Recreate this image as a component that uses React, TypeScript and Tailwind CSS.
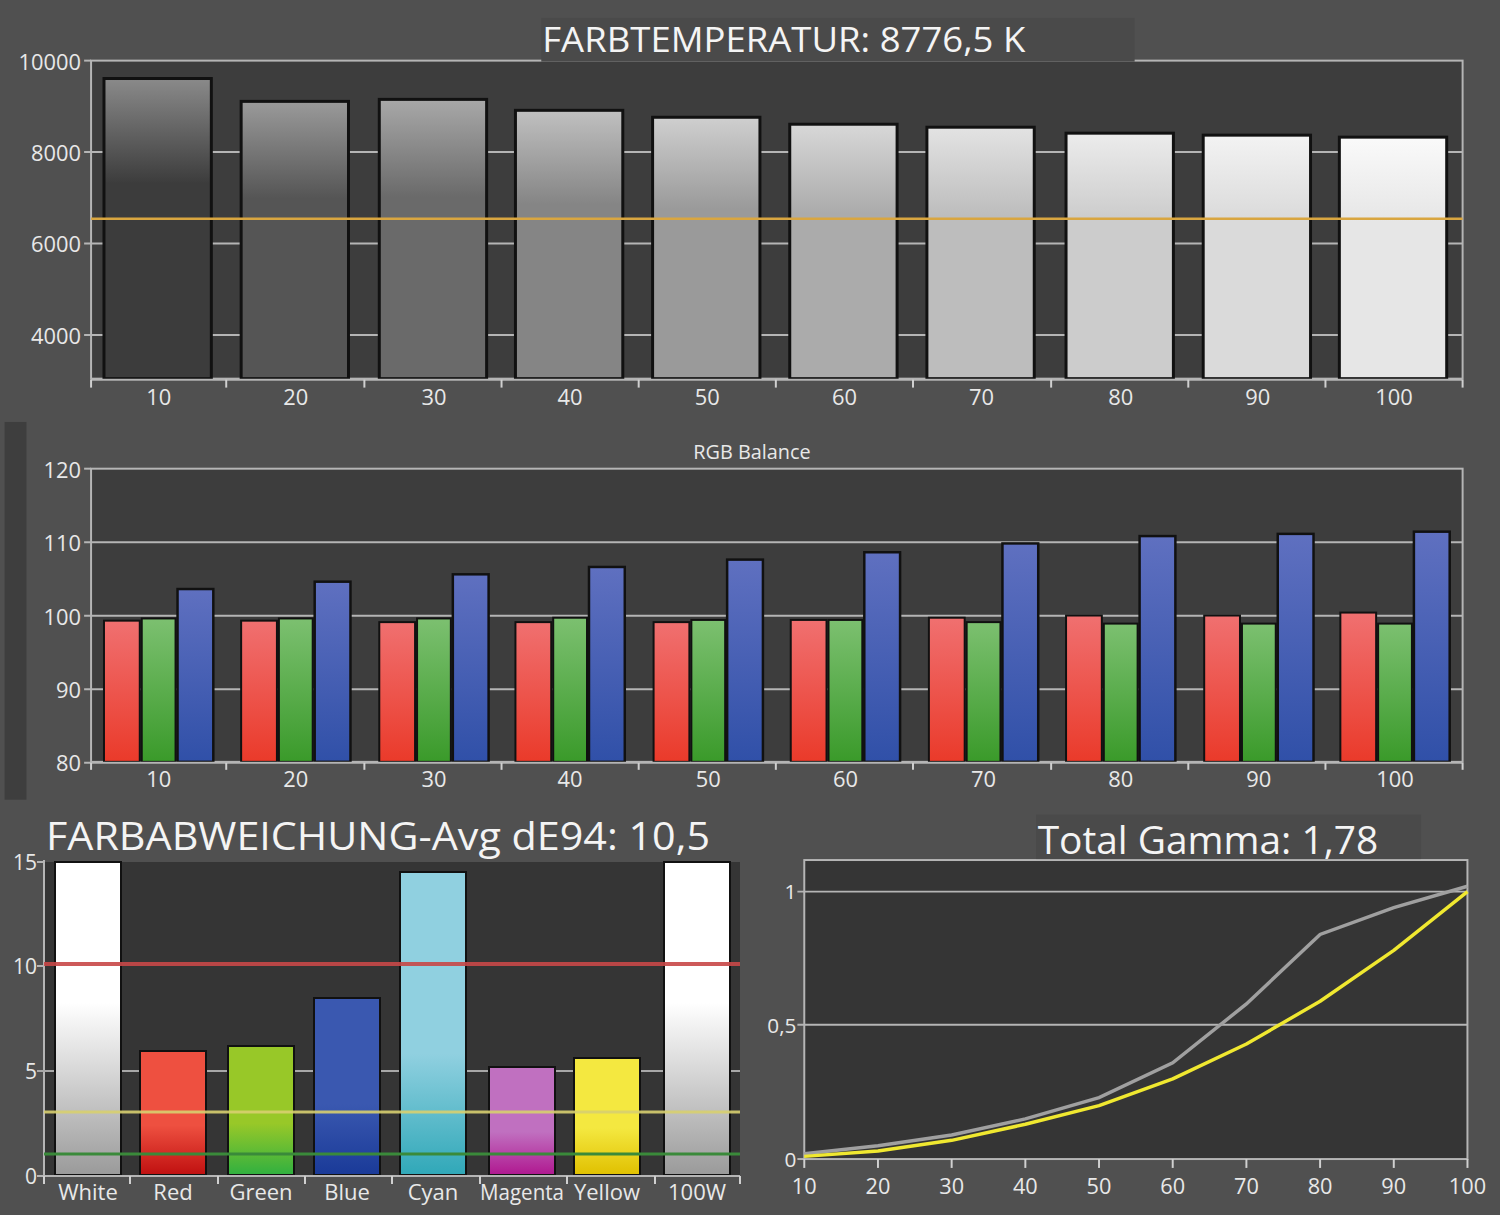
import React from "react";

const F = "'Open Sans', 'Noto Sans', sans-serif";
const lab = { fill: "#e8e8e8", fontFamily: F } as const;

function TopChart() {
  const xs = [100, 238, 377, 514, 652, 790, 928, 1068, 1206, 1343];
  const tops = [79, 102, 100, 111, 118, 125, 128, 134, 136, 138];
  const ticks = [87, 223, 362, 500, 638, 776, 914, 1053, 1191, 1329, 1467];
  const shades = [
    ["#8a8a8a", "#3c3c3c"], ["#9a9a9a", "#555"], ["#a8a8a8", "#6a6a6a"], ["#c0c0c0", "#858585"],
    ["#cfcfcf", "#9a9a9a"], ["#d8d8d8", "#ababab"], ["#e3e3e3", "#bdbdbd"], ["#ececec", "#cccccc"],
    ["#f3f3f3", "#dadada"], ["#fafafa", "#e6e6e6"],
  ];
  return (
    <svg viewBox="0 0 1500 420" className="block w-full h-[420px]">
      <defs>
        {shades.map((s, i) => (
          <linearGradient key={i} id={`t${i}`} x1="0" y1="0" x2="0" y2="1">
            <stop offset="0" stopColor={s[0]} />
            <stop offset="0.35" stopColor={s[1]} />
            <stop offset="1" stopColor={s[1]} />
          </linearGradient>
        ))}
      </defs>
      <rect x="87" y="61" width="1380" height="320" fill="#3d3d3d" />
      <rect x="87" y="61" width="1380" height="320" fill="none" stroke="#b5b5b5" strokeWidth="2" />
      {[153, 245, 337].map((y) => (
        <line key={y} x1="80" x2="1467" y1={y} y2={y} stroke="#b5b5b5" strokeWidth="2" />
      ))}
      <line x1="80" x2="87" y1="61" y2="61" stroke="#b5b5b5" strokeWidth="2" />
      {xs.map((x, i) => (
        <rect key={x} x={x} y={tops[i]} width="108" height={381 - tops[i]} fill={`url(#t${i})`} stroke="#111" strokeWidth="3" />
      ))}
      <line x1="87" x2="1467" y1="220" y2="220" stroke="#d9a640" strokeWidth="2.5" />
      <line x1="87" x2="1467" y1="382" y2="382" stroke="#b5b5b5" strokeWidth="2" />
      {ticks.map((x) => (
        <line key={x} x1={x} x2={x} y1="382" y2="390" stroke="#d0d0d0" strokeWidth="2" />
      ))}
      {[["10000", 70], ["8000", 162], ["6000", 254], ["4000", 346]].map(([t, y]) => (
        <text key={t} x="77" y={y as number} textAnchor="end" fontSize="22" {...lab}>{t}</text>
      ))}
      {xs.map((x, i) => (
        <text key={i} x={x + 55} y="408" textAnchor="middle" fontSize="22" {...lab}>{(i + 1) * 10}</text>
      ))}
      <rect x="540" y="18" width="597" height="44" fill="#4a4a4a" />
      <text x="784" y="52" textAnchor="middle" fontSize="34" textLength="486" lengthAdjust="spacingAndGlyphs" fill="#f4f4f4" fontFamily={F}>FARBTEMPERATUR: 8776,5 K</text>
    </svg>
  );
}

function RgbChart() {
  const xs = [100, 238, 377, 514, 653, 791, 930, 1068, 1207, 1344];
  const R = [99.2, 99.2, 99, 99, 99, 99.3, 99.6, 99.9, 99.9, 100.3];
  const G = [99.5, 99.5, 99.5, 99.6, 99.3, 99.3, 99, 98.8, 98.8, 98.8];
  const B = [103.5, 104.5, 105.5, 106.5, 107.5, 108.5, 109.7, 110.7, 111, 111.3];
  const y = (v: number) => 767 - (v - 80) * 7.4;
  const ticks = [87, 223, 362, 500, 638, 776, 914, 1053, 1191, 1329, 1467];
  return (
    <svg viewBox="0 420 1500 395" className="block w-full h-[395px]">
      <defs>
        <linearGradient id="gr" x1="0" y1="0" x2="0" y2="1"><stop offset="0" stopColor="#f07070" /><stop offset="1" stopColor="#ea3a2a" /></linearGradient>
        <linearGradient id="gg" x1="0" y1="0" x2="0" y2="1"><stop offset="0" stopColor="#7cc070" /><stop offset="1" stopColor="#3a9a2a" /></linearGradient>
        <linearGradient id="gb" x1="0" y1="0" x2="0" y2="1"><stop offset="0" stopColor="#5f70c0" /><stop offset="1" stopColor="#3050a8" /></linearGradient>
      </defs>
      <rect x="0" y="425" width="22" height="380" fill="#3e3e3e" />
      <rect x="87" y="472" width="1380" height="295" fill="#3d3d3d" stroke="#b5b5b5" strokeWidth="2" />
      {[546, 620, 694].map((yy) => (
        <line key={yy} x1="80" x2="1467" y1={yy} y2={yy} stroke="#b5b5b5" strokeWidth="2" />
      ))}
      <line x1="80" x2="87" y1="472" y2="472" stroke="#b5b5b5" strokeWidth="2" />
      {xs.map((x, i) => (
        <g key={x}>
          <rect x={x} y={y(R[i])} width="36" height={767 - y(R[i])} fill="url(#gr)" stroke="#111" strokeWidth="2" />
          <rect x={x + 38} y={y(G[i])} width="34" height={767 - y(G[i])} fill="url(#gg)" stroke="#111" strokeWidth="2" />
          <rect x={x + 74} y={y(B[i])} width="36" height={767 - y(B[i])} fill="url(#gb)" stroke="#111" strokeWidth="2.5" />
        </g>
      ))}
      <line x1="80" x2="1467" y1="768" y2="768" stroke="#b5b5b5" strokeWidth="2" />
      {ticks.map((x) => (
        <line key={x} x1={x} x2={x} y1="768" y2="775" stroke="#d0d0d0" strokeWidth="2" />
      ))}
      {[["120", 481], ["110", 555], ["100", 629], ["90", 703], ["80", 776]].map(([t, yy]) => (
        <text key={t} x="77" y={yy as number} textAnchor="end" fontSize="22" {...lab}>{t}</text>
      ))}
      {xs.map((x, i) => (
        <text key={i} x={x + 55} y="792" textAnchor="middle" fontSize="22" {...lab}>{(i + 1) * 10}</text>
      ))}
      <text x="752" y="462" textAnchor="middle" fontSize="20" {...lab}>RGB Balance</text>
    </svg>
  );
}

function DeltaChart() {
  const bars: [string, number, number, string, string][] = [
    ["White", 55, 862, "#ffffff", "#9a9a9a"],
    ["Red", 140, 1051, "#ee5040", "#c01010"],
    ["Green", 228, 1046, "#98c828", "#30b040"],
    ["Blue", 314, 998, "#3a58b0", "#1a3a98"],
    ["Cyan", 400, 872, "#90d0e0", "#30a8b8"],
    ["Magenta", 489, 1067, "#c070c0", "#b01890"],
    ["Yellow", 574, 1058, "#f4e840", "#e0c000"],
    ["100W", 664, 862, "#ffffff", "#9a9a9a"],
  ];
  const ticks = [44, 130, 218, 305, 392, 480, 567, 655, 740];
  return (
    <svg viewBox="0 810 750 405" className="block w-[750px] h-[405px]">
      <defs>
        {bars.map((b, i) => (
          <linearGradient key={i} id={`d${i}`} x1="0" y1="0" x2="0" y2="1">
            <stop offset="0" stopColor={b[3]} />
            <stop offset={i === 0 || i === 7 ? "0.45" : "0.6"} stopColor={b[3]} />
            <stop offset="1" stopColor={b[4]} />
          </linearGradient>
        ))}
      </defs>
      <rect x="44" y="862" width="696" height="313" fill="#353535" />
      <line x1="44" x2="44" y1="860" y2="1176" stroke="#b5b5b5" strokeWidth="2" />
      <line x1="37" x2="44" y1="862" y2="862" stroke="#b5b5b5" strokeWidth="2" />
      <line x1="37" x2="740" y1="1071" y2="1071" stroke="#a8a8a8" strokeWidth="2" />
      <line x1="37" x2="44" y1="966" y2="966" stroke="#b5b5b5" strokeWidth="2" />
      {bars.map((b, i) => (
        <rect key={i} x={b[1]} y={b[2]} width="66" height={1175 - b[2]} fill={`url(#d${i})`} stroke="#111" strokeWidth="2" />
      ))}
      <line x1="44" x2="740" y1="964" y2="964" stroke="#c84848" strokeWidth="4" opacity="0.9" />
      <line x1="44" x2="740" y1="1112" y2="1112" stroke="#d8d070" strokeWidth="3" opacity="0.9" />
      <line x1="44" x2="740" y1="1154" y2="1154" stroke="#3a8a3a" strokeWidth="3" />
      <line x1="37" x2="740" y1="1176" y2="1176" stroke="#b5b5b5" strokeWidth="2" />
      {ticks.map((x) => (
        <line key={x} x1={x} x2={x} y1="1176" y2="1184" stroke="#d0d0d0" strokeWidth="2" />
      ))}
      {[["15", 870], ["10", 974], ["5", 1079], ["0", 1184]].map(([t, y]) => (
        <text key={t} x="37" y={y as number} textAnchor="end" fontSize="21" {...lab}>{t}</text>
      ))}
      {bars.map((b, i) => (
        <text key={i} x={b[1] + 33} y="1200" textAnchor="middle" fontSize="22" {...lab} textLength={b[0] === "Magenta" ? 84 : undefined} lengthAdjust="spacingAndGlyphs">{b[0]}</text>
      ))}
      <text x="46" y="850" fontSize="38" textLength="664" lengthAdjust="spacingAndGlyphs" fill="#f4f4f4" fontFamily={F}>FARBABWEICHUNG-Avg dE94: 10,5</text>
    </svg>
  );
}

function GammaChart() {
  const px = (i: number) => 795 + i * 74.67;
  const py = (v: number) => 1161 - v * 271;
  const gray = [0.02, 0.05, 0.09, 0.15, 0.23, 0.36, 0.58, 0.84, 0.94, 1.02];
  const yel = [0.01, 0.03, 0.07, 0.13, 0.2, 0.3, 0.43, 0.59, 0.78, 1.0];
  const pts = (a: number[]) => a.map((v, i) => `${px(i)},${py(v)}`).join(" ");
  return (
    <svg viewBox="740 810 760 405" className="block w-[750px] h-[405px]">
      <rect x="795" y="858" width="672" height="303" fill="#353535" stroke="#b5b5b5" strokeWidth="2" />
      <line x1="788" x2="1467" y1="890" y2="890" stroke="#b5b5b5" strokeWidth="2" />
      <line x1="788" x2="1467" y1="1025" y2="1025" stroke="#b5b5b5" strokeWidth="2" />
      <line x1="788" x2="795" y1="1161" y2="1161" stroke="#b5b5b5" strokeWidth="2" />
      <polyline points={pts(gray)} fill="none" stroke="#a0a0a0" strokeWidth="3.5" />
      <polyline points={pts(yel)} fill="none" stroke="#f0e830" strokeWidth="3.5" strokeLinejoin="round" />
      {Array.from({ length: 10 }, (_, i) => (
        <g key={i}>
          <line x1={px(i)} x2={px(i)} y1="1161" y2="1170" stroke="#d0d0d0" strokeWidth="2" />
          <text x={px(i)} y="1196" textAnchor="middle" fontSize="22" {...lab}>{(i + 1) * 10}</text>
        </g>
      ))}
      {[["1", 898], ["0,5", 1033], ["0", 1169]].map(([t, y]) => (
        <text key={t} x="787" y={y as number} textAnchor="end" fontSize="21" {...lab}>{t}</text>
      ))}
      <rect x="1030" y="812" width="390" height="45" fill="#4a4a4a" />
      <text x="1204" y="852" textAnchor="middle" fontSize="38" textLength="345" lengthAdjust="spacingAndGlyphs" fill="#f4f4f4" fontFamily={F}>Total Gamma: 1,78</text>
    </svg>
  );
}

export default function App() {
  return (
    <div className="w-[1500px] h-[1215px] bg-[#505050] flex flex-col overflow-hidden">
      <TopChart />
      <RgbChart />
      <div className="flex">
        <DeltaChart />
        <GammaChart />
      </div>
    </div>
  );
}
